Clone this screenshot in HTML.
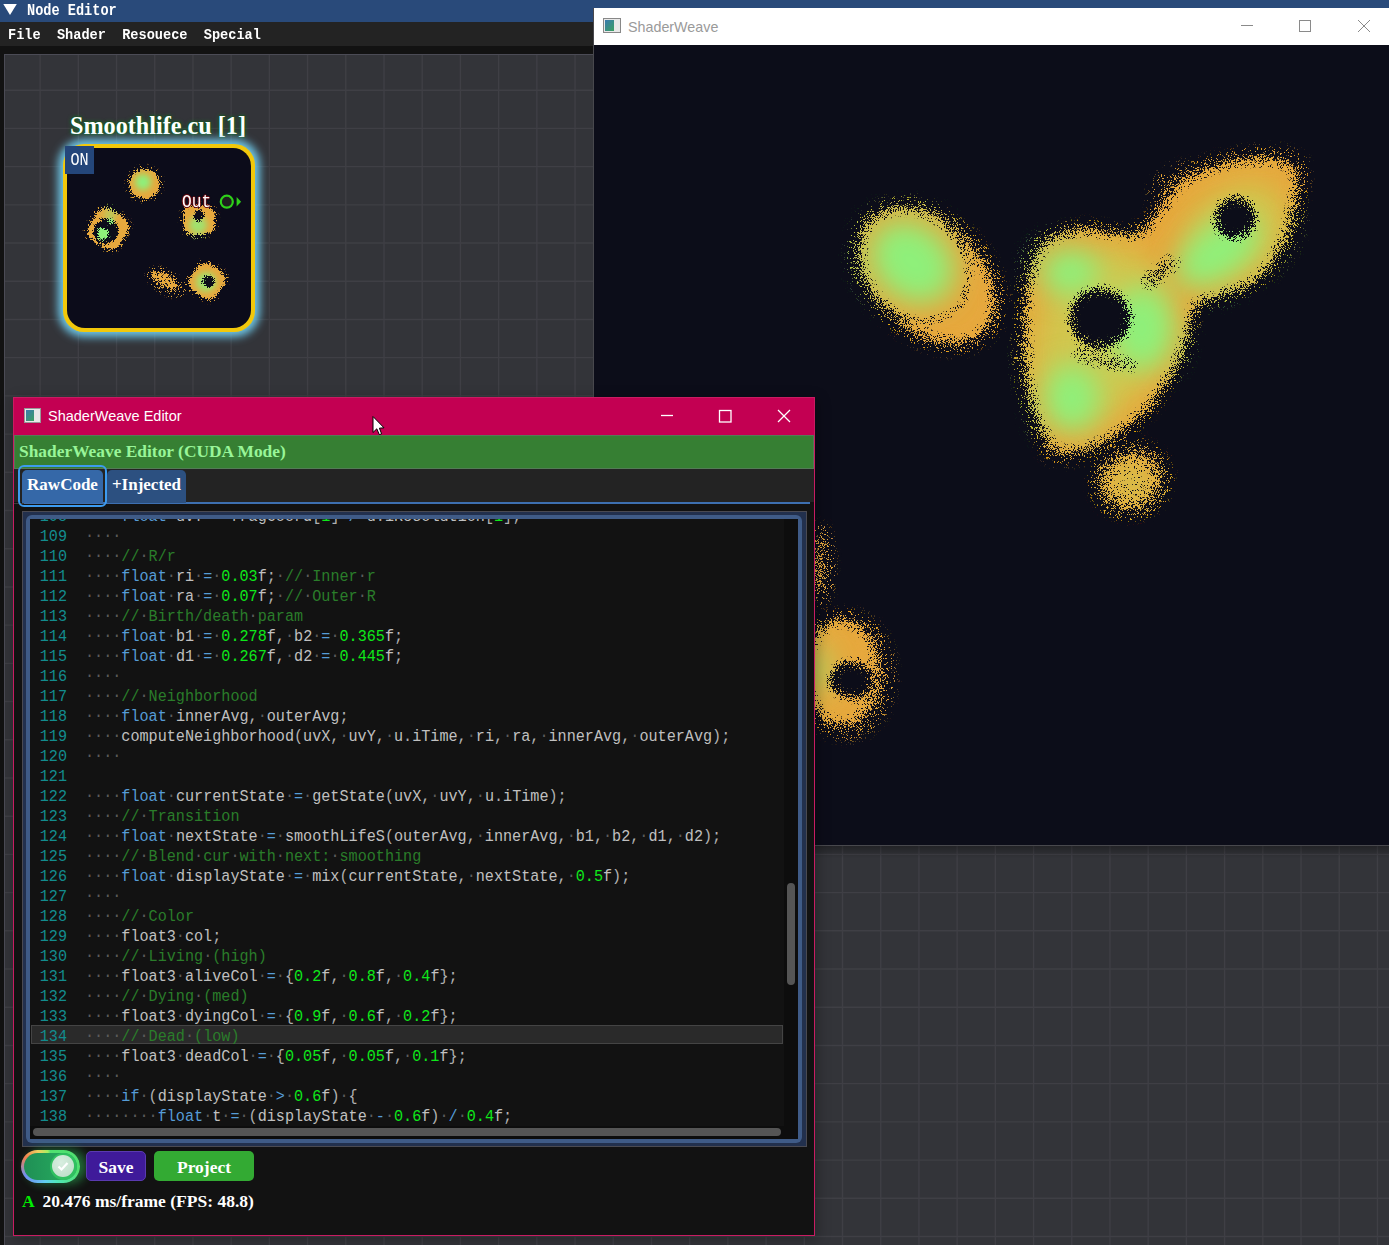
<!DOCTYPE html>
<html><head><meta charset="utf-8">
<style>
html,body{margin:0;padding:0}
body{width:1389px;height:1245px;overflow:hidden;position:relative;background:#121212;font-family:"Liberation Sans",sans-serif}
.a{position:absolute}
.mono{font-family:"Liberation Mono",monospace}
.serif{font-family:"Liberation Serif",serif}
/* code */
.ln,.cl{position:absolute;height:20px;line-height:20px;white-space:pre;font-family:"Liberation Mono",monospace;font-size:15.15px;color:#c0c0c0;transform:scaleY(1.1);transform-origin:0 14px}
.ln{left:39px;width:28px;text-align:right}
.num{color:#128c8e}
.cl{left:85px}
.d{color:#5c5c5c;position:relative;top:-1.5px}
.k{color:#569cd6}
.o{color:#569cd6}
.n{color:#0ee81a}
.p{color:#b0b0b0}
.c{color:#2a7d2a}
</style></head>
<body>
<!-- ===== Node Editor background window ===== -->
<div class="a" style="left:0;top:0;width:1389px;height:22px;background:#294a7a"></div>
<svg class="a" style="left:0;top:0" width="22" height="22"><polygon points="3.3,4 16.8,4 10,15" fill="#fff"/></svg>
<div class="a mono" style="left:27px;top:1px;height:22px;line-height:22px;font-size:13.6px;color:#fff;font-weight:bold;white-space:pre;transform:scaleY(1.15);transform-origin:0 14px">Node Editor</div>
<div class="a" style="left:0;top:22px;width:1389px;height:24px;background:#232323"></div>
<div class="a mono" style="left:8px;top:24px;height:24px;line-height:24px;font-size:13.6px;color:#fff;font-weight:bold;white-space:pre;transform:scaleY(1.12);transform-origin:0 15px">File  Shader  Resouece  Special</div>
<div class="a" style="left:4px;top:54px;width:1385px;height:1191px;background:#4b4b55"></div>
<div class="a" style="left:5px;top:55px;width:1384px;height:1190px;background:#333439;overflow:hidden"><svg width="1384" height="1190" style="position:absolute;left:0;top:0" stroke="#3f3f45" stroke-width="1.4"><line x1="35.10" y1="0" x2="35.10" y2="1190"/><line x1="73.31" y1="0" x2="73.31" y2="1190"/><line x1="111.52" y1="0" x2="111.52" y2="1190"/><line x1="149.73" y1="0" x2="149.73" y2="1190"/><line x1="187.94" y1="0" x2="187.94" y2="1190"/><line x1="226.15" y1="0" x2="226.15" y2="1190"/><line x1="264.36" y1="0" x2="264.36" y2="1190"/><line x1="302.57" y1="0" x2="302.57" y2="1190"/><line x1="340.78" y1="0" x2="340.78" y2="1190"/><line x1="378.99" y1="0" x2="378.99" y2="1190"/><line x1="417.20" y1="0" x2="417.20" y2="1190"/><line x1="455.41" y1="0" x2="455.41" y2="1190"/><line x1="493.62" y1="0" x2="493.62" y2="1190"/><line x1="531.83" y1="0" x2="531.83" y2="1190"/><line x1="570.04" y1="0" x2="570.04" y2="1190"/><line x1="608.25" y1="0" x2="608.25" y2="1190"/><line x1="646.46" y1="0" x2="646.46" y2="1190"/><line x1="684.67" y1="0" x2="684.67" y2="1190"/><line x1="722.88" y1="0" x2="722.88" y2="1190"/><line x1="761.09" y1="0" x2="761.09" y2="1190"/><line x1="799.30" y1="0" x2="799.30" y2="1190"/><line x1="837.51" y1="0" x2="837.51" y2="1190"/><line x1="875.72" y1="0" x2="875.72" y2="1190"/><line x1="913.93" y1="0" x2="913.93" y2="1190"/><line x1="952.14" y1="0" x2="952.14" y2="1190"/><line x1="990.35" y1="0" x2="990.35" y2="1190"/><line x1="1028.56" y1="0" x2="1028.56" y2="1190"/><line x1="1066.77" y1="0" x2="1066.77" y2="1190"/><line x1="1104.98" y1="0" x2="1104.98" y2="1190"/><line x1="1143.19" y1="0" x2="1143.19" y2="1190"/><line x1="1181.40" y1="0" x2="1181.40" y2="1190"/><line x1="1219.61" y1="0" x2="1219.61" y2="1190"/><line x1="1257.82" y1="0" x2="1257.82" y2="1190"/><line x1="1296.03" y1="0" x2="1296.03" y2="1190"/><line x1="1334.24" y1="0" x2="1334.24" y2="1190"/><line x1="1372.45" y1="0" x2="1372.45" y2="1190"/><line x1="0" y1="35.20" x2="1384" y2="35.20"/><line x1="0" y1="73.41" x2="1384" y2="73.41"/><line x1="0" y1="111.62" x2="1384" y2="111.62"/><line x1="0" y1="149.83" x2="1384" y2="149.83"/><line x1="0" y1="188.04" x2="1384" y2="188.04"/><line x1="0" y1="226.25" x2="1384" y2="226.25"/><line x1="0" y1="264.46" x2="1384" y2="264.46"/><line x1="0" y1="302.67" x2="1384" y2="302.67"/><line x1="0" y1="340.88" x2="1384" y2="340.88"/><line x1="0" y1="379.09" x2="1384" y2="379.09"/><line x1="0" y1="417.30" x2="1384" y2="417.30"/><line x1="0" y1="455.51" x2="1384" y2="455.51"/><line x1="0" y1="493.72" x2="1384" y2="493.72"/><line x1="0" y1="531.93" x2="1384" y2="531.93"/><line x1="0" y1="570.14" x2="1384" y2="570.14"/><line x1="0" y1="608.35" x2="1384" y2="608.35"/><line x1="0" y1="646.56" x2="1384" y2="646.56"/><line x1="0" y1="684.77" x2="1384" y2="684.77"/><line x1="0" y1="722.98" x2="1384" y2="722.98"/><line x1="0" y1="761.19" x2="1384" y2="761.19"/><line x1="0" y1="799.40" x2="1384" y2="799.40"/><line x1="0" y1="837.61" x2="1384" y2="837.61"/><line x1="0" y1="875.82" x2="1384" y2="875.82"/><line x1="0" y1="914.03" x2="1384" y2="914.03"/><line x1="0" y1="952.24" x2="1384" y2="952.24"/><line x1="0" y1="990.45" x2="1384" y2="990.45"/><line x1="0" y1="1028.66" x2="1384" y2="1028.66"/><line x1="0" y1="1066.87" x2="1384" y2="1066.87"/><line x1="0" y1="1105.08" x2="1384" y2="1105.08"/><line x1="0" y1="1143.29" x2="1384" y2="1143.29"/><line x1="0" y1="1181.50" x2="1384" y2="1181.50"/></svg></div>

<!-- node -->
<div class="a serif" style="left:58px;top:110px;width:200px;height:32px;line-height:32px;text-align:center;font-size:24.2px;font-weight:bold;color:#fff;white-space:pre;text-shadow:0 0 1px #0b5d1a,0 0 2px #0b5d1a,0 0 4px #1a7a2a">Smoothlife.cu [1]</div>
<div class="a" style="left:62.5px;top:144px;width:192px;height:188px;border-radius:21px;box-shadow:0 0 9px 5px #6ec6e6;background:#f2c80a"></div>
<div class="a" style="left:66.5px;top:148px;width:184px;height:180px;border-radius:18px;background:#0c0c1a;overflow:hidden">
<svg class="a" style="left:-66.5px;top:-148px" width="300" height="350">
 <defs><filter id="nb1" x="-50%" y="-50%" width="200%" height="200%"><feGaussianBlur stdDeviation="1.5"/></filter><filter id="nb2" x="-50%" y="-50%" width="200%" height="200%"><feGaussianBlur stdDeviation="2.5"/></filter><filter id="nb3" x="-50%" y="-50%" width="200%" height="200%"><feGaussianBlur stdDeviation="3"/></filter><filter id="ngrain" x="0" y="0" width="300" height="350" filterUnits="userSpaceOnUse" color-interpolation-filters="sRGB"><feTurbulence type="fractalNoise" baseFrequency="1.7" numOctaves="1" seed="7" result="n"/><feColorMatrix in="n" type="matrix" values="0 0 0 0 0  0 0 0 0 0  0 0 0 0 0  3 0 0 0 -1" result="na"/><feComposite in="SourceAlpha" in2="na" operator="arithmetic" k1="0" k2="1.2" k3="-1" k4="0" result="d"/><feComponentTransfer in="d" result="m"><feFuncA type="linear" slope="12" intercept="0"/></feComponentTransfer><feComponentTransfer in="SourceGraphic" result="s1"><feFuncA type="linear" slope="200" intercept="0"/></feComponentTransfer><feComposite in="s1" in2="m" operator="in"/></filter>
  <mask id="nholes" maskUnits="userSpaceOnUse" x="0" y="0" width="300" height="350">
   <rect x="0" y="0" width="300" height="350" fill="#fff"/>
   <g filter="url(#nb1)" fill="#000">
    <ellipse cx="106" cy="231" rx="12.5" ry="13.5" transform="rotate(30 106 231)"/>
    <circle cx="198.6" cy="215.5" r="5.5"/>
    <circle cx="208.5" cy="281.5" r="6"/>
   </g>
  </mask>
 </defs>
 <g filter="url(#ngrain)"><g mask="url(#nholes)">
 <g filter="url(#nb2)" fill="#e6a83c" opacity=".28">
  <ellipse cx="144.5" cy="184" rx="17" ry="16.5"/>
  <rect x="89" y="210" width="38" height="38" rx="12" transform="rotate(30 108 229)"/>
  <rect x="182" y="205" width="34" height="30" rx="10"/>
  <rect x="190" y="264" width="34" height="34" rx="11" transform="rotate(35 207 281)"/>
  <ellipse cx="166" cy="282" rx="20" ry="10" transform="rotate(32 166 282)"/>
 </g>
 <g filter="url(#nb1)" fill="#e6a83c">
  <ellipse cx="144.5" cy="184" rx="14.5" ry="14"/>
  <rect x="90.5" y="211.5" width="35" height="35" rx="11" transform="rotate(30 108 229)"/>
  <rect x="183.5" y="206.5" width="31" height="27" rx="9"/>
  <rect x="191.5" y="265.5" width="31" height="31" rx="10" transform="rotate(35 207 281)"/>
  <ellipse cx="164" cy="280" rx="14" ry="6" transform="rotate(32 164 280)" opacity=".6"/>
 </g>
 <g filter="url(#nb3)" fill="#8ef07a">
  <circle cx="143" cy="182" r="8"/>
  <circle cx="198" cy="225" r="9" opacity=".8"/>
  <circle cx="206" cy="282" r="10" opacity=".8"/>
  <circle cx="110" cy="215" r="6" opacity=".5"/>
 </g>
 </g>
 <g filter="url(#nb1)" fill="#8ef07a">
  <circle cx="102.7" cy="233.9" r="5.5"/>
  <circle cx="110.5" cy="221" r="2.5"/>
 </g>
 </g>
</svg>
</div>
<div class="a" style="left:65px;top:146px;width:29px;height:28px;background:#24467a"></div>
<div class="a mono" style="left:65px;top:146px;width:29px;height:28px;line-height:28px;text-align:center;font-size:18px;color:#fff;transform:scaleX(.84);transform-origin:14.5px 0">ON</div>
<div class="a mono" style="left:182px;top:190px;height:24px;line-height:24px;font-size:18px;color:#fff;transform:scaleX(.9);transform-origin:0 0;text-shadow:1px 0 0 #6a0a10,-1px 0 0 #6a0a10,0 1px 0 #6a0a10,0 -1px 0 #6a0a10,0 0 2px #6a0a10">Out</div>
<svg class="a" style="left:215px;top:190px" width="30" height="24"><circle cx="11.8" cy="11.7" r="6" fill="#1e1e1e" stroke="#2ed01a" stroke-width="2.2"/><polygon points="21.6,7.1 26.1,11.7 21.6,16.6" fill="#2ed01a"/></svg>

<!-- ===== ShaderWeave output window ===== -->
<div class="a" style="left:593px;top:846px;width:800px;height:12px;background:linear-gradient(rgba(0,0,0,.32),rgba(0,0,0,0))"></div><div class="a" style="left:593px;top:8px;width:800px;height:838px;background:#48484d"></div>
<div class="a" style="left:594px;top:8px;width:800px;height:37px;background:#fff"></div>
<div class="a" style="left:603px;top:18px;width:18px;height:15px;background:#e8e8e8;border:1px solid #888;box-sizing:border-box"></div>
<div class="a" style="left:605px;top:20px;width:9px;height:11px;background:linear-gradient(135deg,#3a7ab0,#3aa060)"></div>
<div class="a" style="left:628px;top:9px;height:37px;line-height:37px;font-size:14.3px;color:#9a9a9a;white-space:pre">ShaderWeave</div>
<svg class="a" style="left:1230px;top:8px" width="159" height="37" fill="none" stroke="#8a8a8a" stroke-width="1">
  <line x1="11" y1="17.5" x2="23" y2="17.5"/>
  <rect x="69.5" y="12.5" width="11" height="11"/>
  <line x1="128" y1="12" x2="140" y2="24"/><line x1="140" y1="12" x2="128" y2="24"/>
</svg>
<div class="a" style="left:594px;top:45px;width:800px;height:800px;background:#0c0d19;overflow:hidden" id="shader"><svg class="a" style="left:-594px;top:-45px" width="1389" height="900">
 <defs><filter id="b3" x="-50%" y="-50%" width="200%" height="200%"><feGaussianBlur stdDeviation="3"/></filter><filter id="b5" x="-50%" y="-50%" width="200%" height="200%"><feGaussianBlur stdDeviation="5"/></filter><filter id="b7" x="-50%" y="-50%" width="200%" height="200%"><feGaussianBlur stdDeviation="7"/></filter><filter id="b8" x="-50%" y="-50%" width="200%" height="200%"><feGaussianBlur stdDeviation="8"/></filter><filter id="b10" x="-50%" y="-50%" width="200%" height="200%"><feGaussianBlur stdDeviation="10"/></filter><filter id="b14" x="-50%" y="-50%" width="200%" height="200%"><feGaussianBlur stdDeviation="14"/></filter><filter id="grain" x="0" y="0" width="1389" height="900" filterUnits="userSpaceOnUse" color-interpolation-filters="sRGB"><feTurbulence type="fractalNoise" baseFrequency="1.7" numOctaves="1" seed="4" result="n"/><feColorMatrix in="n" type="matrix" values="0 0 0 0 0  0 0 0 0 0  0 0 0 0 0  3 0 0 0 -1" result="na"/><feComposite in="SourceAlpha" in2="na" operator="arithmetic" k1="0" k2="1.2" k3="-1" k4="0" result="d"/><feComponentTransfer in="d" result="m"><feFuncA type="linear" slope="12" intercept="0"/></feComponentTransfer><feComponentTransfer in="SourceGraphic" result="s1"><feFuncA type="linear" slope="200" intercept="0"/></feComponentTransfer><feComposite in="s1" in2="m" operator="in"/></filter>
  <mask id="holes" maskUnits="userSpaceOnUse" x="0" y="0" width="1389" height="900">
   <rect x="0" y="0" width="1389" height="900" fill="#fff"/>
   <g filter="url(#b5)" fill="#000">
    <ellipse cx="1100" cy="318" rx="31" ry="30"/>
    <circle cx="1235" cy="218" r="21"/>
    <ellipse cx="852" cy="680" rx="22" ry="19"/>
   </g>
   <g filter="url(#b5)" fill="#000" opacity=".45">
    <ellipse cx="1160" cy="272" rx="26" ry="9" transform="rotate(-40 1160 272)"/>
    <ellipse cx="1105" cy="360" rx="36" ry="8" transform="rotate(12 1105 360)"/>
   </g>
   <g filter="url(#b3)" fill="none" stroke="#000" stroke-width="5" opacity=".55">
    <path d="M872,300 C900,326 945,328 962,302 C976,280 968,246 946,224"/>
   </g>
  </mask>
 </defs>
 <g filter="url(#grain)"><g mask="url(#holes)">
 <g filter="url(#b8)" fill="#e6a83c" opacity=".32">
  <ellipse cx="928" cy="276" rx="82" ry="56" transform="rotate(45 928 276)"/>
  <path d="M1042,255 C1046.7,245.2 1050.5,243.8 1058,240 C1065.5,236.2 1075.5,232.3 1087,232 C1098.5,231.7 1116.5,238.7 1127,238 C1137.5,237.3 1142.8,234.3 1150,228 C1157.2,221.7 1163.0,208.3 1170,200 C1177.0,191.7 1182.0,183.8 1192,178 C1202.0,172.2 1218.3,167.7 1230,165 C1241.7,162.3 1251.7,161.5 1262,162 C1272.3,162.5 1287.0,162.0 1292,168 C1297.0,174.0 1293.3,188.5 1292,198 C1290.7,207.5 1286.7,217.0 1284,225 C1281.3,233.0 1281.3,237.2 1276,246 C1270.7,254.8 1262.7,270.0 1252,278 C1241.3,286.0 1221.8,289.7 1212,294 C1202.2,298.3 1197.3,298.7 1193,304 C1188.7,309.3 1189.5,315.8 1186,326 C1182.5,336.2 1178.7,351.8 1172,365 C1165.3,378.2 1157.0,393.0 1146,405 C1135.0,417.0 1120.0,429.5 1106,437 C1092.0,444.5 1072.0,451.5 1062,450 C1052.0,448.5 1051.0,440.0 1046,428 C1041.0,416.0 1034.7,399.5 1032,378 C1029.3,356.5 1028.3,319.5 1030,299 C1031.7,278.5 1037.3,264.8 1042,255 Z" transform="translate(1150 300) scale(1.05) translate(-1150 -300)"/>
  <ellipse cx="1180" cy="190" rx="26" ry="18" transform="rotate(-30 1180 190)"/>
  <ellipse cx="846" cy="675" rx="42" ry="58"/>
  <ellipse cx="1131" cy="480" rx="34" ry="31" transform="rotate(-30 1131 480)"/>
 </g>
 <g filter="url(#b7)" fill="#e6a83c">
  <ellipse cx="928" cy="276" rx="76" ry="50" transform="rotate(45 928 276)"/>
  <path d="M1042,255 C1046.7,245.2 1050.5,243.8 1058,240 C1065.5,236.2 1075.5,232.3 1087,232 C1098.5,231.7 1116.5,238.7 1127,238 C1137.5,237.3 1142.8,234.3 1150,228 C1157.2,221.7 1163.0,208.3 1170,200 C1177.0,191.7 1182.0,183.8 1192,178 C1202.0,172.2 1218.3,167.7 1230,165 C1241.7,162.3 1251.7,161.5 1262,162 C1272.3,162.5 1287.0,162.0 1292,168 C1297.0,174.0 1293.3,188.5 1292,198 C1290.7,207.5 1286.7,217.0 1284,225 C1281.3,233.0 1281.3,237.2 1276,246 C1270.7,254.8 1262.7,270.0 1252,278 C1241.3,286.0 1221.8,289.7 1212,294 C1202.2,298.3 1197.3,298.7 1193,304 C1188.7,309.3 1189.5,315.8 1186,326 C1182.5,336.2 1178.7,351.8 1172,365 C1165.3,378.2 1157.0,393.0 1146,405 C1135.0,417.0 1120.0,429.5 1106,437 C1092.0,444.5 1072.0,451.5 1062,450 C1052.0,448.5 1051.0,440.0 1046,428 C1041.0,416.0 1034.7,399.5 1032,378 C1029.3,356.5 1028.3,319.5 1030,299 C1031.7,278.5 1037.3,264.8 1042,255 Z"/>
  <ellipse cx="842" cy="672" rx="34" ry="50"/>
  <ellipse cx="819" cy="565" rx="7" ry="36" opacity=".6"/>
 </g>
 <g filter="url(#b10)" fill="#e6a83c" opacity=".7">
  <ellipse cx="1131" cy="480" rx="28" ry="25" transform="rotate(-30 1131 480)"/>
 </g>
 <g filter="url(#b14)" fill="#c4da5a" opacity=".6">
  <ellipse cx="1100" cy="335" rx="62" ry="90" transform="rotate(20 1100 335)"/>
  <ellipse cx="1235" cy="230" rx="55" ry="40" transform="rotate(-40 1235 230)"/>
  <ellipse cx="1131" cy="482" rx="18" ry="15"/>
 </g>
 <g filter="url(#b14)" fill="#8ef07a">
  <ellipse cx="912" cy="262" rx="46" ry="37" transform="rotate(42 912 262)"/>
  <ellipse cx="1142" cy="328" rx="32" ry="42"/>
  <ellipse cx="1072" cy="398" rx="28" ry="34"/>
  <ellipse cx="1070" cy="272" rx="30" ry="24"/>
  <ellipse cx="1218" cy="252" rx="48" ry="26" transform="rotate(-35 1218 252)"/>
  <ellipse cx="818" cy="670" rx="10" ry="26" opacity=".7"/>
 </g>
 <g filter="url(#b5)" fill="#e6a83c" opacity=".45">
  <circle cx="848" cy="676" r="9"/>
 </g>
 </g></g>
</svg></div>

<!-- ===== Editor window ===== -->
<div class="a" style="left:13px;top:397px;width:802px;height:839px;background:#c81c62;box-shadow:2px 3px 12px 1px rgba(0,0,0,.28)"></div><div class="a" style="left:14px;top:398px;width:800px;height:37px;background:#c30052"></div>
<div class="a" style="left:14px;top:435px;width:800px;height:800px;background:#121212"></div>
<div class="a" style="left:24px;top:408px;width:17px;height:15px;background:#e8e8e8;border:1px solid #999;box-sizing:border-box"></div>
<div class="a" style="left:26px;top:410px;width:8px;height:11px;background:linear-gradient(135deg,#3a7ab0,#3aa060)"></div>
<div class="a" style="left:48px;top:397px;height:38px;line-height:38px;font-size:14.5px;color:#fff;white-space:pre">ShaderWeave Editor</div>
<svg class="a" style="left:640px;top:397px" width="175" height="38" fill="none" stroke="#fff" stroke-width="1.3">
  <line x1="21" y1="18.5" x2="33" y2="18.5"/>
  <rect x="79.5" y="13.5" width="11.5" height="11.5"/>
  <line x1="138" y1="13" x2="150" y2="25"/><line x1="150" y1="13" x2="138" y2="25"/>
</svg>
<div class="a" style="left:14px;top:435px;width:800px;height:34px;background:#367f33;box-shadow:inset 0 0 0 1px rgba(120,120,128,.45)"></div>
<div class="a serif" style="left:19px;top:433.5px;height:34px;line-height:34px;font-size:17.4px;font-weight:bold;color:#98f598;white-space:pre">ShaderWeave Editor (CUDA Mode)</div>
<div class="a" style="left:14px;top:469px;width:800px;height:33px;background:#232323"></div>
<div class="a" style="left:14px;top:502.5px;width:796px;height:1px;background:#3a3a3a"></div><div class="a" style="left:24px;top:502px;width:786px;height:1.5px;background:#3d6fb0"></div>
<!-- tabs -->
<div class="a" style="left:22px;top:470px;width:81px;height:33px;background:#3568a8;border-radius:5px 5px 0 0"></div>
<div class="a" style="left:107px;top:470px;width:79px;height:33px;background:#2c5080;border-radius:5px 5px 0 0"></div>
<div class="a" style="left:17.5px;top:465px;width:89.5px;height:41.5px;border:2px solid #3d9bf0;border-radius:6px;box-sizing:border-box"></div>
<div class="a serif" style="left:22px;top:469px;width:81px;height:32px;line-height:32px;text-align:center;font-size:17px;font-weight:bold;color:#fff">RawCode</div>
<div class="a serif" style="left:107px;top:469px;width:79px;height:32px;line-height:32px;text-align:center;font-size:17px;font-weight:bold;color:#fff">+Injected</div>

<!-- code frame -->
<div class="a" style="left:22px;top:511px;width:785px;height:636px;background:#4a4a52"></div>
<div class="a" style="left:23px;top:512px;width:783px;height:634px;background:#22304d"></div>
<div class="a" style="left:26px;top:515px;width:776px;height:628px;background:#3f5b87;border-radius:6px"></div>
<div class="a" style="left:30px;top:519px;width:768px;height:620px;background:#121212;overflow:hidden" id="codewrap">
  <div class="a" style="left:0;top:0;width:768px;height:620px;">
  </div>
</div>
<div class="a" style="left:30px;top:519px;width:768px;height:620px;overflow:hidden">
  <div class="a" style="left:-30px;top:-519px;width:1389px;height:1245px">
    <div class="a" style="left:31px;top:1025px;width:752px;height:19px;background:#2a2a2a;border:1px solid #444;box-sizing:border-box"></div>
    <div class="ln" style="top:507px"><span class="num">108</span></div><div class="cl" style="top:507px"><span class="d">····</span><span class="k">float</span><span class="d">·</span>uvY<span class="d">·</span><span class="o">=</span><span class="d">·</span>fragCoord<span class="p">[</span><span class="n">1</span><span class="p">]</span><span class="d">·</span><span class="o">/</span><span class="d">·</span>u<span class="p">.</span>iResolution<span class="p">[</span><span class="n">1</span><span class="p">]</span><span class="p">;</span></div>
<div class="ln" style="top:527px"><span class="num">109</span></div><div class="cl" style="top:527px"><span class="d">····</span></div>
<div class="ln" style="top:547px"><span class="num">110</span></div><div class="cl" style="top:547px"><span class="d">····</span><span class="c">//</span><span class="d">·</span><span class="c">R/r</span></div>
<div class="ln" style="top:567px"><span class="num">111</span></div><div class="cl" style="top:567px"><span class="d">····</span><span class="k">float</span><span class="d">·</span>ri<span class="d">·</span><span class="o">=</span><span class="d">·</span><span class="n">0.03</span>f<span class="p">;</span><span class="d">·</span><span class="c">//</span><span class="d">·</span><span class="c">Inner</span><span class="d">·</span><span class="c">r</span></div>
<div class="ln" style="top:587px"><span class="num">112</span></div><div class="cl" style="top:587px"><span class="d">····</span><span class="k">float</span><span class="d">·</span>ra<span class="d">·</span><span class="o">=</span><span class="d">·</span><span class="n">0.07</span>f<span class="p">;</span><span class="d">·</span><span class="c">//</span><span class="d">·</span><span class="c">Outer</span><span class="d">·</span><span class="c">R</span></div>
<div class="ln" style="top:607px"><span class="num">113</span></div><div class="cl" style="top:607px"><span class="d">····</span><span class="c">//</span><span class="d">·</span><span class="c">Birth/death</span><span class="d">·</span><span class="c">param</span></div>
<div class="ln" style="top:627px"><span class="num">114</span></div><div class="cl" style="top:627px"><span class="d">····</span><span class="k">float</span><span class="d">·</span>b1<span class="d">·</span><span class="o">=</span><span class="d">·</span><span class="n">0.278</span>f<span class="p">,</span><span class="d">·</span>b2<span class="d">·</span><span class="o">=</span><span class="d">·</span><span class="n">0.365</span>f<span class="p">;</span></div>
<div class="ln" style="top:647px"><span class="num">115</span></div><div class="cl" style="top:647px"><span class="d">····</span><span class="k">float</span><span class="d">·</span>d1<span class="d">·</span><span class="o">=</span><span class="d">·</span><span class="n">0.267</span>f<span class="p">,</span><span class="d">·</span>d2<span class="d">·</span><span class="o">=</span><span class="d">·</span><span class="n">0.445</span>f<span class="p">;</span></div>
<div class="ln" style="top:667px"><span class="num">116</span></div><div class="cl" style="top:667px"><span class="d">····</span></div>
<div class="ln" style="top:687px"><span class="num">117</span></div><div class="cl" style="top:687px"><span class="d">····</span><span class="c">//</span><span class="d">·</span><span class="c">Neighborhood</span></div>
<div class="ln" style="top:707px"><span class="num">118</span></div><div class="cl" style="top:707px"><span class="d">····</span><span class="k">float</span><span class="d">·</span>innerAvg<span class="p">,</span><span class="d">·</span>outerAvg<span class="p">;</span></div>
<div class="ln" style="top:727px"><span class="num">119</span></div><div class="cl" style="top:727px"><span class="d">····</span>computeNeighborhood<span class="p">(</span>uvX<span class="p">,</span><span class="d">·</span>uvY<span class="p">,</span><span class="d">·</span>u<span class="p">.</span>iTime<span class="p">,</span><span class="d">·</span>ri<span class="p">,</span><span class="d">·</span>ra<span class="p">,</span><span class="d">·</span>innerAvg<span class="p">,</span><span class="d">·</span>outerAvg<span class="p">)</span><span class="p">;</span></div>
<div class="ln" style="top:747px"><span class="num">120</span></div><div class="cl" style="top:747px"><span class="d">····</span></div>
<div class="ln" style="top:767px"><span class="num">121</span></div><div class="cl" style="top:767px"></div>
<div class="ln" style="top:787px"><span class="num">122</span></div><div class="cl" style="top:787px"><span class="d">····</span><span class="k">float</span><span class="d">·</span>currentState<span class="d">·</span><span class="o">=</span><span class="d">·</span>getState<span class="p">(</span>uvX<span class="p">,</span><span class="d">·</span>uvY<span class="p">,</span><span class="d">·</span>u<span class="p">.</span>iTime<span class="p">)</span><span class="p">;</span></div>
<div class="ln" style="top:807px"><span class="num">123</span></div><div class="cl" style="top:807px"><span class="d">····</span><span class="c">//</span><span class="d">·</span><span class="c">Transition</span></div>
<div class="ln" style="top:827px"><span class="num">124</span></div><div class="cl" style="top:827px"><span class="d">····</span><span class="k">float</span><span class="d">·</span>nextState<span class="d">·</span><span class="o">=</span><span class="d">·</span>smoothLifeS<span class="p">(</span>outerAvg<span class="p">,</span><span class="d">·</span>innerAvg<span class="p">,</span><span class="d">·</span>b1<span class="p">,</span><span class="d">·</span>b2<span class="p">,</span><span class="d">·</span>d1<span class="p">,</span><span class="d">·</span>d2<span class="p">)</span><span class="p">;</span></div>
<div class="ln" style="top:847px"><span class="num">125</span></div><div class="cl" style="top:847px"><span class="d">····</span><span class="c">//</span><span class="d">·</span><span class="c">Blend</span><span class="d">·</span><span class="c">cur</span><span class="d">·</span><span class="c">with</span><span class="d">·</span><span class="c">next:</span><span class="d">·</span><span class="c">smoothing</span></div>
<div class="ln" style="top:867px"><span class="num">126</span></div><div class="cl" style="top:867px"><span class="d">····</span><span class="k">float</span><span class="d">·</span>displayState<span class="d">·</span><span class="o">=</span><span class="d">·</span>mix<span class="p">(</span>currentState<span class="p">,</span><span class="d">·</span>nextState<span class="p">,</span><span class="d">·</span><span class="n">0.5</span>f<span class="p">)</span><span class="p">;</span></div>
<div class="ln" style="top:887px"><span class="num">127</span></div><div class="cl" style="top:887px"><span class="d">····</span></div>
<div class="ln" style="top:907px"><span class="num">128</span></div><div class="cl" style="top:907px"><span class="d">····</span><span class="c">//</span><span class="d">·</span><span class="c">Color</span></div>
<div class="ln" style="top:927px"><span class="num">129</span></div><div class="cl" style="top:927px"><span class="d">····</span>float3<span class="d">·</span>col<span class="p">;</span></div>
<div class="ln" style="top:947px"><span class="num">130</span></div><div class="cl" style="top:947px"><span class="d">····</span><span class="c">//</span><span class="d">·</span><span class="c">Living</span><span class="d">·</span><span class="c">(high)</span></div>
<div class="ln" style="top:967px"><span class="num">131</span></div><div class="cl" style="top:967px"><span class="d">····</span>float3<span class="d">·</span>aliveCol<span class="d">·</span><span class="o">=</span><span class="d">·</span><span class="p">{</span><span class="n">0.2</span>f<span class="p">,</span><span class="d">·</span><span class="n">0.8</span>f<span class="p">,</span><span class="d">·</span><span class="n">0.4</span>f<span class="p">}</span><span class="p">;</span></div>
<div class="ln" style="top:987px"><span class="num">132</span></div><div class="cl" style="top:987px"><span class="d">····</span><span class="c">//</span><span class="d">·</span><span class="c">Dying</span><span class="d">·</span><span class="c">(med)</span></div>
<div class="ln" style="top:1007px"><span class="num">133</span></div><div class="cl" style="top:1007px"><span class="d">····</span>float3<span class="d">·</span>dyingCol<span class="d">·</span><span class="o">=</span><span class="d">·</span><span class="p">{</span><span class="n">0.9</span>f<span class="p">,</span><span class="d">·</span><span class="n">0.6</span>f<span class="p">,</span><span class="d">·</span><span class="n">0.2</span>f<span class="p">}</span><span class="p">;</span></div>
<div class="ln" style="top:1027px"><span class="num">134</span></div><div class="cl" style="top:1027px"><span class="d">····</span><span class="c">//</span><span class="d">·</span><span class="c">Dead</span><span class="d">·</span><span class="c">(low)</span></div>
<div class="ln" style="top:1047px"><span class="num">135</span></div><div class="cl" style="top:1047px"><span class="d">····</span>float3<span class="d">·</span>deadCol<span class="d">·</span><span class="o">=</span><span class="d">·</span><span class="p">{</span><span class="n">0.05</span>f<span class="p">,</span><span class="d">·</span><span class="n">0.05</span>f<span class="p">,</span><span class="d">·</span><span class="n">0.1</span>f<span class="p">}</span><span class="p">;</span></div>
<div class="ln" style="top:1067px"><span class="num">136</span></div><div class="cl" style="top:1067px"><span class="d">····</span></div>
<div class="ln" style="top:1087px"><span class="num">137</span></div><div class="cl" style="top:1087px"><span class="d">····</span><span class="k">if</span><span class="d">·</span><span class="p">(</span>displayState<span class="d">·</span><span class="o">&gt;</span><span class="d">·</span><span class="n">0.6</span>f<span class="p">)</span><span class="d">·</span><span class="p">{</span></div>
<div class="ln" style="top:1107px"><span class="num">138</span></div><div class="cl" style="top:1107px"><span class="d">········</span><span class="k">float</span><span class="d">·</span>t<span class="d">·</span><span class="o">=</span><span class="d">·</span><span class="p">(</span>displayState<span class="d">·</span><span class="o">-</span><span class="d">·</span><span class="n">0.6</span>f<span class="p">)</span><span class="d">·</span><span class="o">/</span><span class="d">·</span><span class="n">0.4</span>f<span class="p">;</span></div>
  </div>
  <div class="a" style="left:754px;top:0;width:14px;height:607px;background:#0d0d0d"></div>
  <div class="a" style="left:757px;top:364px;width:8px;height:102px;background:#555;border-radius:4px"></div>
  <div class="a" style="left:0;top:607px;width:768px;height:13px;background:#0d0d0d"></div>
  <div class="a" style="left:3px;top:609px;width:748px;height:8px;background:#555;border-radius:4px"></div>
</div>

<!-- toolbar -->
<div class="a" style="left:21px;top:1150px;width:59px;height:33px;border-radius:17px;box-shadow:6px 0 10px 1px rgba(50,210,100,.45)"></div>
<div class="a" style="left:21px;top:1150px;width:59px;height:33px;border-radius:17px;background:conic-gradient(from 0deg at 50% 50%,#50e070 0deg,#50e070 100deg,#50e8c0 160deg,#60d0f0 200deg,#7090f0 250deg,#f08050 290deg,#f0d060 320deg,#a0f060 350deg,#50e070 360deg)"></div>
<div class="a" style="left:24px;top:1153px;width:53px;height:27px;border-radius:14px;background:linear-gradient(90deg,#1f8f55,#28b060)"></div>
<div class="a" style="left:50px;top:1153px;width:27px;height:27px;border-radius:50%;background:#30c060"></div>
<div class="a" style="left:52px;top:1155px;width:22px;height:22px;border-radius:50%;background:radial-gradient(circle at 40% 35%,#d8eee0,#b8dcc4)"></div>
<svg class="a" style="left:52px;top:1155px" width="22" height="22"><path d="M6.5,11.5 L9.5,14.5 L15.5,8" fill="none" stroke="#fff" stroke-width="2.2"/></svg>
<div class="a" style="left:86px;top:1151px;width:60px;height:30px;background:#3f1a9a;border-radius:5px;border:1px solid #5a3ab0;box-sizing:border-box"></div>
<div class="a serif" style="left:86px;top:1151px;width:60px;height:30px;line-height:32px;text-align:center;font-size:17.5px;font-weight:bold;color:#fff">Save</div>
<div class="a" style="left:154px;top:1151px;width:100px;height:30px;background:#33aa33;border-radius:5px"></div>
<div class="a serif" style="left:154px;top:1151px;width:100px;height:30px;line-height:32px;text-align:center;font-size:17.5px;font-weight:bold;color:#fff">Project</div>
<div class="a serif" style="left:22px;top:1189px;height:24px;line-height:24px;font-size:17.5px;font-weight:bold;color:#fff;white-space:pre"><span style="color:#00ee00">A</span>  20.476 ms/frame (FPS: 48.8)</div>

<!-- cursor -->
<svg class="a" style="left:372px;top:415px" width="14" height="22"><path d="M1,1.5 L1,17.5 L4.8,13.8 L7.3,19.6 L9.6,18.8 L7.4,13.2 L12,12.8 Z" fill="#fff" stroke="#000" stroke-width="1"/></svg>
</body></html>
